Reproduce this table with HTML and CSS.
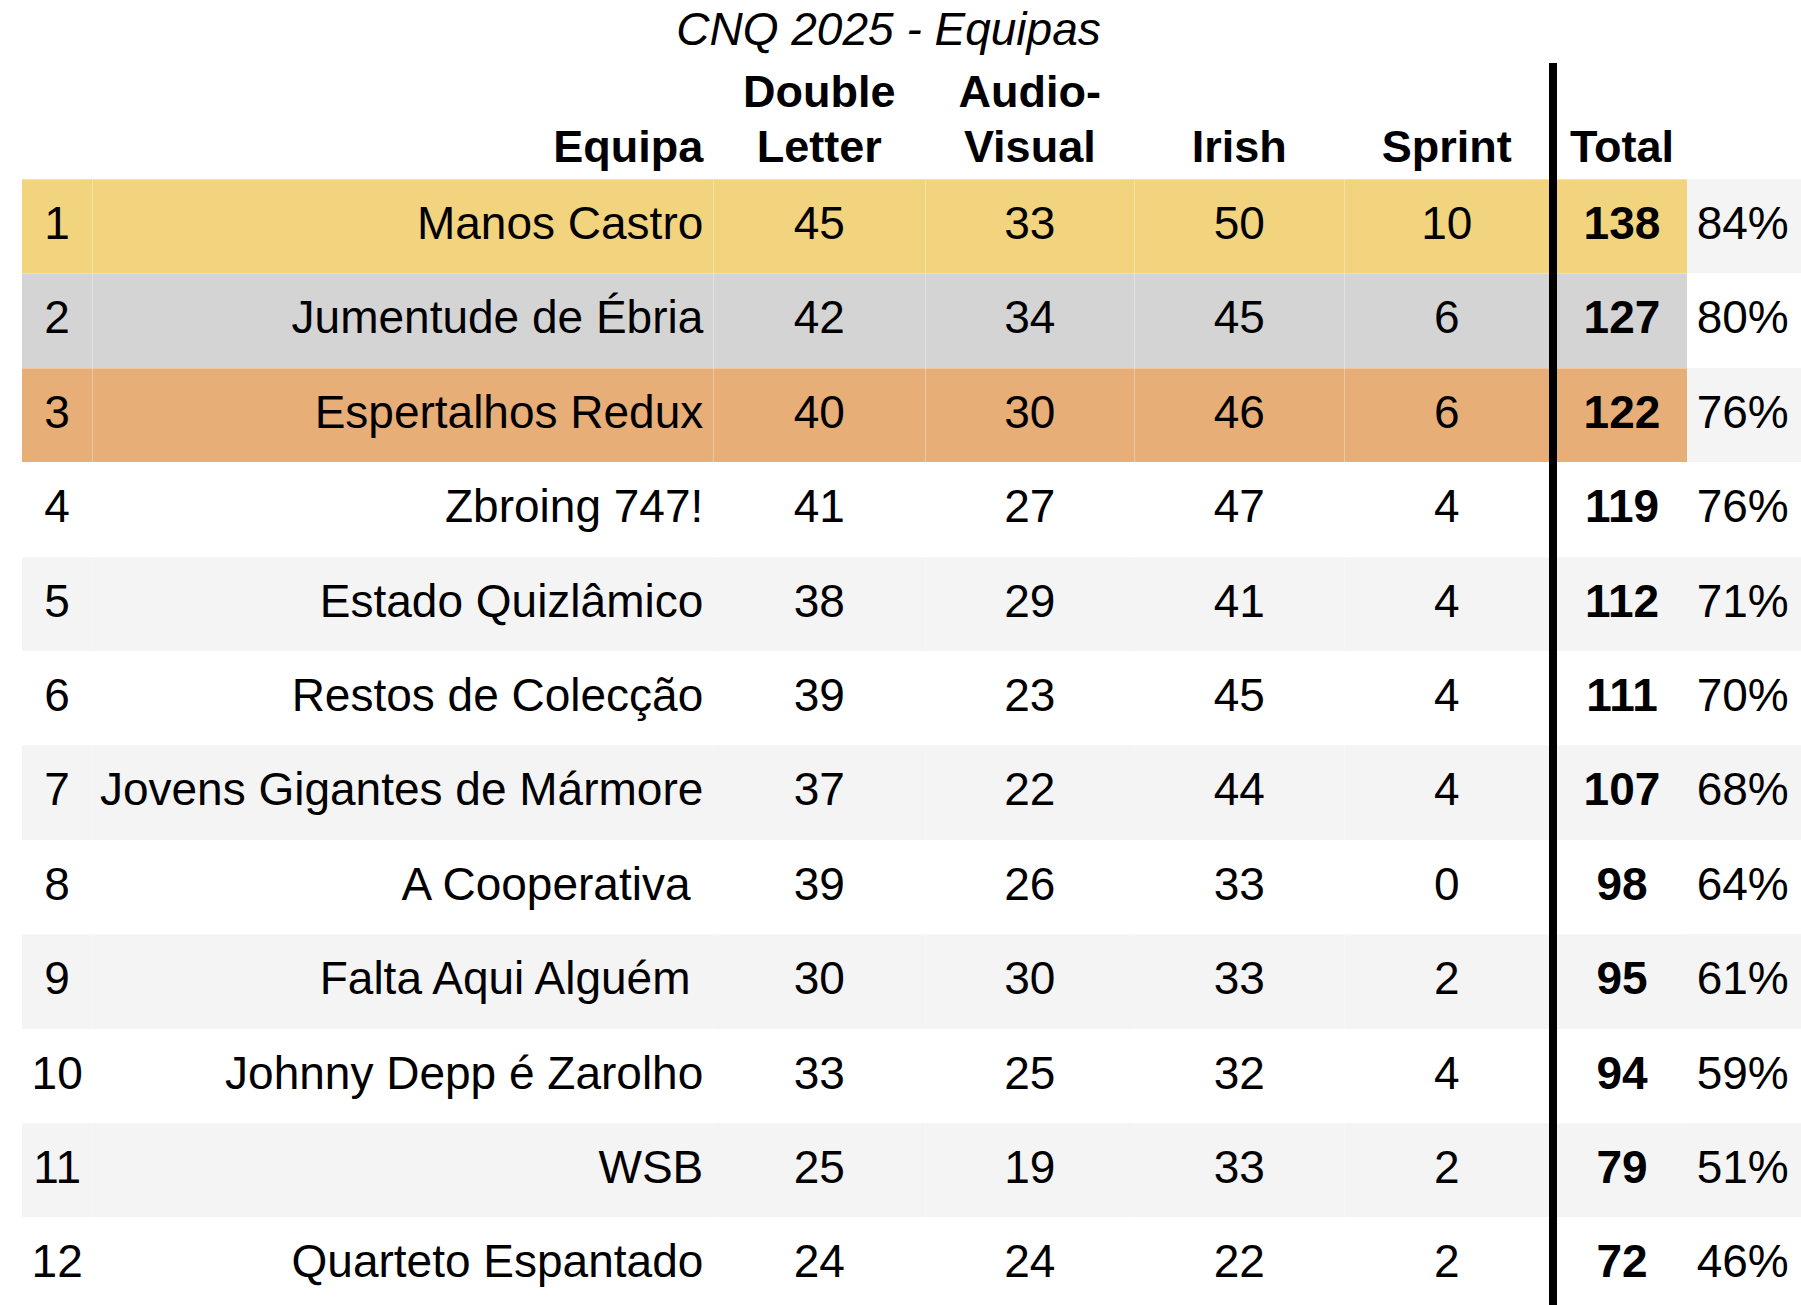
FILE: index.html
```html
<!DOCTYPE html>
<html lang="pt">
<head>
<meta charset="utf-8">
<title>CNQ 2025 - Equipas</title>
<link rel="stylesheet" href="styles.css">
</head>
<body>
<div class="title">CNQ 2025 - Equipas</div>
<div class="table">
  <div class="row head">
    <div class="c rank"></div>
    <div class="c name">Equipa</div>
    <div class="c num">Double<br>Letter</div>
    <div class="c num">Audio-<br>Visual</div>
    <div class="c num">Irish</div>
    <div class="c num">Sprint</div>
    <div class="c total">Total</div>
    <div class="c pct"></div>
  </div>
  <div class="row odd gold">
    <div class="c rank">1</div><div class="c name">Manos Castro</div>
    <div class="c num">45</div><div class="c num">33</div><div class="c num">50</div><div class="c num">10</div>
    <div class="c total">138</div><div class="c pct">84%</div>
  </div>
  <div class="row silver">
    <div class="c rank">2</div><div class="c name">Jumentude de Ébria</div>
    <div class="c num">42</div><div class="c num">34</div><div class="c num">45</div><div class="c num">6</div>
    <div class="c total">127</div><div class="c pct">80%</div>
  </div>
  <div class="row odd bronze">
    <div class="c rank">3</div><div class="c name">Espertalhos Redux</div>
    <div class="c num">40</div><div class="c num">30</div><div class="c num">46</div><div class="c num">6</div>
    <div class="c total">122</div><div class="c pct">76%</div>
  </div>
  <div class="row">
    <div class="c rank">4</div><div class="c name">Zbroing 747!</div>
    <div class="c num">41</div><div class="c num">27</div><div class="c num">47</div><div class="c num">4</div>
    <div class="c total">119</div><div class="c pct">76%</div>
  </div>
  <div class="row odd">
    <div class="c rank">5</div><div class="c name">Estado Quizlâmico</div>
    <div class="c num">38</div><div class="c num">29</div><div class="c num">41</div><div class="c num">4</div>
    <div class="c total">112</div><div class="c pct">71%</div>
  </div>
  <div class="row">
    <div class="c rank">6</div><div class="c name">Restos de Colecção</div>
    <div class="c num">39</div><div class="c num">23</div><div class="c num">45</div><div class="c num">4</div>
    <div class="c total">111</div><div class="c pct">70%</div>
  </div>
  <div class="row odd">
    <div class="c rank">7</div><div class="c name">Jovens Gigantes de Mármore</div>
    <div class="c num">37</div><div class="c num">22</div><div class="c num">44</div><div class="c num">4</div>
    <div class="c total">107</div><div class="c pct">68%</div>
  </div>
  <div class="row">
    <div class="c rank">8</div><div class="c name">A Cooperativa </div>
    <div class="c num">39</div><div class="c num">26</div><div class="c num">33</div><div class="c num">0</div>
    <div class="c total">98</div><div class="c pct">64%</div>
  </div>
  <div class="row odd">
    <div class="c rank">9</div><div class="c name">Falta Aqui Alguém </div>
    <div class="c num">30</div><div class="c num">30</div><div class="c num">33</div><div class="c num">2</div>
    <div class="c total">95</div><div class="c pct">61%</div>
  </div>
  <div class="row">
    <div class="c rank">10</div><div class="c name">Johnny Depp é Zarolho</div>
    <div class="c num">33</div><div class="c num">25</div><div class="c num">32</div><div class="c num">4</div>
    <div class="c total">94</div><div class="c pct">59%</div>
  </div>
  <div class="row odd">
    <div class="c rank">11</div><div class="c name">WSB</div>
    <div class="c num">25</div><div class="c num">19</div><div class="c num">33</div><div class="c num">2</div>
    <div class="c total">79</div><div class="c pct">51%</div>
  </div>
  <div class="row">
    <div class="c rank">12</div><div class="c name">Quarteto Espantado</div>
    <div class="c num">24</div><div class="c num">24</div><div class="c num">22</div><div class="c num">2</div>
    <div class="c total">72</div><div class="c pct">46%</div>
  </div>
</div>
</body>
</html>
```

FILE: styles.css
```css
html, body {
  margin: 0;
  padding: 0;
  overflow: hidden;
  background: #ffffff;
}

body {
  font-family: "Liberation Sans", Arial, Helvetica, sans-serif;
  color: #000;
  width: 1801px;
  height: 1305px;
}

.title {
  margin-left: 22px;
  width: 1733px;
  height: 63px;
  box-sizing: border-box;
  padding-bottom: 4px;
  line-height: 59px;
  font-size: 46px;
  font-style: italic;
  text-align: center;
  white-space: nowrap;
}

.table {
  margin-left: 22px;
  width: 1800px;
}

.row {
  display: grid;
  grid-template-columns: 70.3px 621px 212px 209px 210px 205px 137.4px 130px;
  height: 94.4px;
}

.c {
  box-sizing: border-box;
  height: 100%;
  font-size: 46px;
  line-height: 89px;
  padding-bottom: 5.4px;
  white-space: pre;
  overflow: visible;
  box-shadow: inset 1px 0 0 rgba(255, 255, 255, 0.3), inset 0 1px 0 rgba(255, 255, 255, 0.3);
}

.rank { text-align: center; box-shadow: inset 0 1px 0 rgba(255, 255, 255, 0.3); }
.name { text-align: right; padding-right: 10px; }
.num { text-align: center; }
.total {
  text-align: center;
  font-weight: bold;
  border-left: 8px solid #000;
  box-shadow: inset 0 1px 0 rgba(255, 255, 255, 0.3);
}
.pct { text-align: left; padding-left: 10px; box-shadow: none; }

/* header */
.row.head {
  height: 116px;
}
.row.head .c {
  display: flex;
  flex-direction: column;
  justify-content: flex-end;
  align-items: center;
  font-size: 45px;
  font-weight: bold;
  line-height: 55px;
  padding-bottom: 5.4px;
  box-shadow: none;
  white-space: nowrap;
}
.row.head .name {
  align-items: flex-end;
  padding-right: 10px;
}
.row.head .rank,
.row.head .pct { background: transparent; }

/* striping */
.row.odd .c { background: #f4f4f4; }

/* podium */
.row.gold .c:not(.pct) { background: #f2d37e; }
.row.silver .c:not(.pct) { background: #d4d4d4; }
.row.bronze .c:not(.pct) { background: #e7ae77; }
```
